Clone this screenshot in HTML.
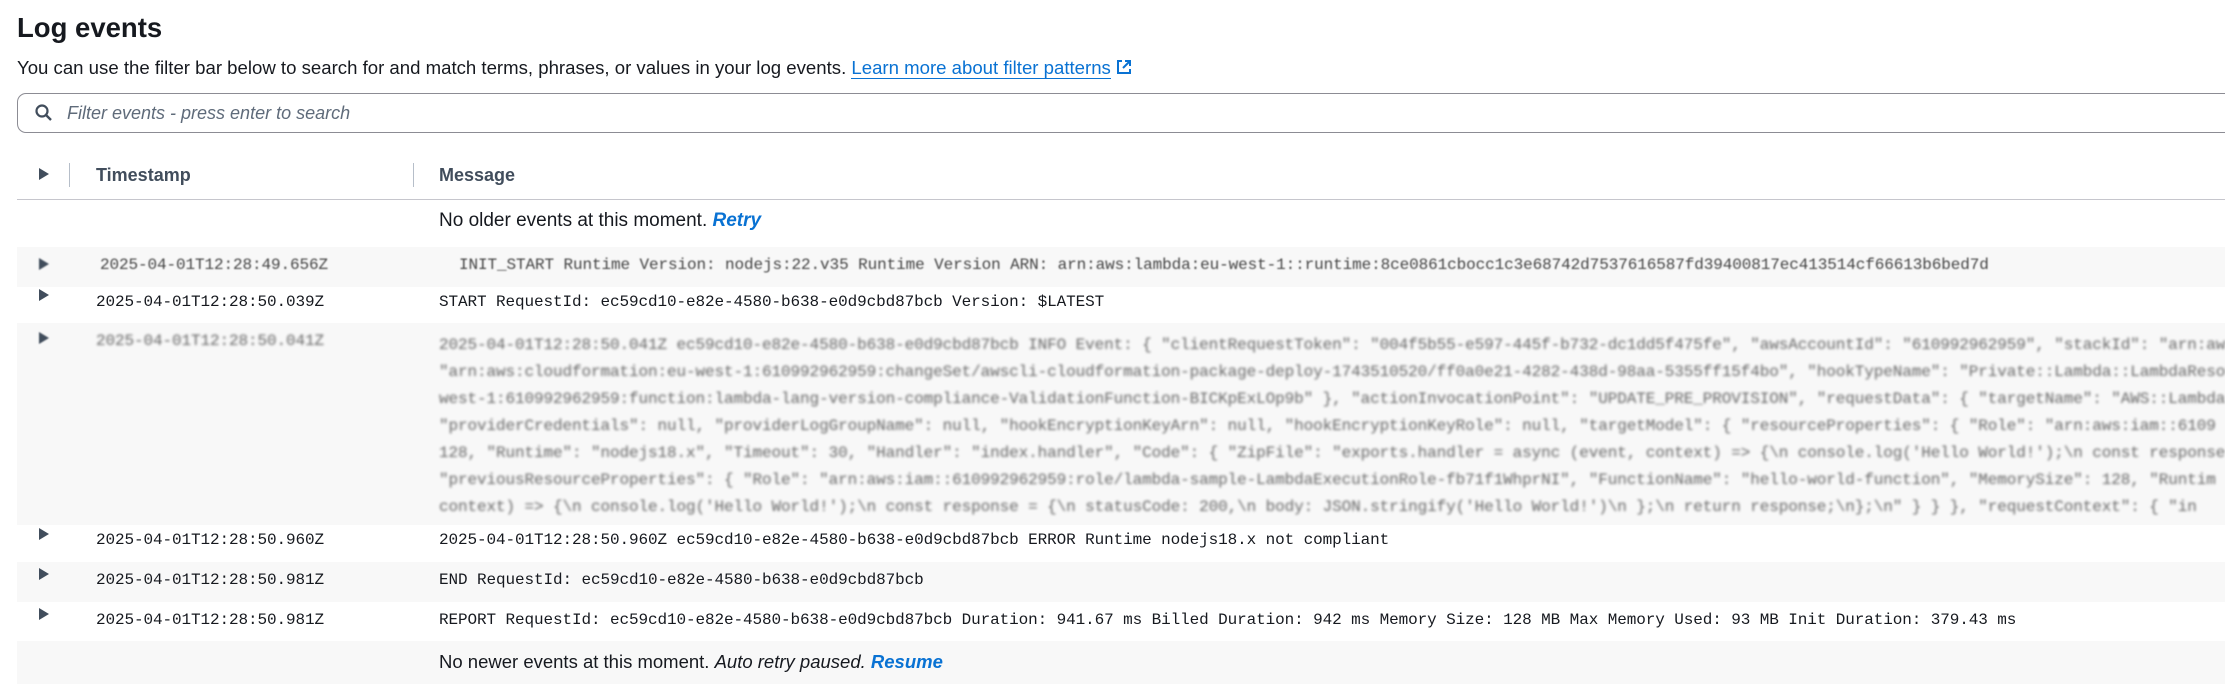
<!DOCTYPE html>
<html><head><meta charset="utf-8">
<style>
*{margin:0;padding:0;box-sizing:border-box}
body{width:2225px;height:693px;overflow:hidden;background:#fff;font-family:"Liberation Sans",sans-serif;color:#16191f;position:relative}
.a{position:absolute;white-space:nowrap}
h1{position:absolute;left:17px;top:12px;font-size:27.5px;font-weight:bold;color:#16191f}
.desc{left:17px;top:57px;font-size:18.6px}
.desc a{color:#0972d3;text-decoration:none;border-bottom:1.5px solid #0972d3}
.search{position:absolute;left:17px;top:93px;width:2230px;height:40px;border:1.5px solid #8c8c94;border-radius:9px}
.search span{position:absolute;left:49px;top:9px;font-size:18px;font-style:italic;color:#5f6b7a}
.tri{position:absolute;width:0;height:0;border-top:6px solid transparent;border-bottom:6px solid transparent;border-left:10px solid #414d5c}
.mono{font-family:"Liberation Mono",monospace;font-size:16px;letter-spacing:-0.1px}
.bg{position:absolute;left:17px;width:2208px;background:#f8f8f8}
.hd{font-size:18px;font-weight:bold;color:#414d5c}
.blur{filter:blur(1.2px);color:#666}
.blur2{filter:blur(0.7px);color:#444}
.lnk{color:#0972d3;font-weight:bold;font-style:italic}
.nt{font-size:19px}
</style></head><body>
<h1>Log events</h1>
<div class="a desc">You can use the filter bar below to search for and match terms, phrases, or values in your log events. <a>Learn more about filter patterns</a> <svg width="16" height="16" viewBox="0 0 16 16" style="vertical-align:-1px"><path d="M6 2H2v12h12v-4M9 2h5v5M14 2L7 9" fill="none" stroke="#0972d3" stroke-width="2"/></svg></div>
<div class="search"><svg style="position:absolute;left:16px;top:9px" width="20" height="20" viewBox="0 0 20 20"><circle cx="8" cy="8" r="5.5" fill="none" stroke="#414d5c" stroke-width="2.2"/><path d="M12 12l5 5" stroke="#414d5c" stroke-width="2.4"/></svg><span>Filter events - press enter to search</span></div>

<div class="tri" style="left:39px;top:168px"></div>
<div style="position:absolute;left:69px;top:163px;width:1px;height:24px;background:#b6bec9"></div>
<div class="a hd" style="left:96px;top:165px">Timestamp</div>
<div style="position:absolute;left:413px;top:163px;width:1px;height:24px;background:#b6bec9"></div>
<div class="a hd" style="left:439px;top:165px">Message</div>
<div style="position:absolute;left:17px;top:199px;width:2208px;height:1px;background:#c6c6cd"></div>

<div class="a nt" style="left:439px;top:210px">No older events at this moment. <span class="lnk">Retry</span></div>

<div class="bg" style="top:247px;height:40px"></div>
<div class="tri blur2" style="left:39px;top:258px"></div>
<div class="a mono blur2" style="left:100px;top:256px">2025-04-01T12:28:49.656Z</div>
<div class="a mono blur2" style="left:459px;top:256px">INIT_START Runtime Version: nodejs:22.v35 Runtime Version ARN: arn:aws:lambda:eu-west-1::runtime:8ce0861cbocc1c3e68742d7537616587fd39400817ec413514cf66613b6bed7d</div>

<div class="tri" style="left:39px;top:289px"></div>
<div class="a mono" style="left:96px;top:293px">2025-04-01T12:28:50.039Z</div>
<div class="a mono" style="left:439px;top:293px">START RequestId: ec59cd10-e82e-4580-b638-e0d9cbd87bcb Version: $LATEST</div>

<div class="bg" style="top:323px;height:202px"></div>
<div class="tri blur2" style="left:39px;top:332px"></div>
<div class="a mono blur" style="left:96px;top:332px">2025-04-01T12:28:50.041Z</div>
<div class="a mono blur" style="left:439px;top:332px;line-height:27px">2025-04-01T12:28:50.041Z ec59cd10-e82e-4580-b638-e0d9cbd87bcb INFO Event: { "clientRequestToken": "004f5b55-e597-445f-b732-dc1dd5f475fe", "awsAccountId": "610992962959", "stackId": "arn:aws<br>"arn:aws:cloudformation:eu-west-1:610992962959:changeSet/awscli-cloudformation-package-deploy-1743510520/ff0a0e21-4282-438d-98aa-5355ff15f4bo", "hookTypeName": "Private::Lambda::LambdaResou<br>west-1:610992962959:function:lambda-lang-version-compliance-ValidationFunction-BICKpExLOp9b" }, "actionInvocationPoint": "UPDATE_PRE_PROVISION", "requestData": { "targetName": "AWS::Lambda:<br>"providerCredentials": null, "providerLogGroupName": null, "hookEncryptionKeyArn": null, "hookEncryptionKeyRole": null, "targetModel": { "resourceProperties": { "Role": "arn:aws:iam::6109<br>128, "Runtime": "nodejs18.x", "Timeout": 30, "Handler": "index.handler", "Code": { "ZipFile": "exports.handler = async (event, context) => {\n console.log('Hello World!');\n const response<br>"previousResourceProperties": { "Role": "arn:aws:iam::610992962959:role/lambda-sample-LambdaExecutionRole-fb71f1WhprNI", "FunctionName": "hello-world-function", "MemorySize": 128, "Runtim<br>context) => {\n console.log('Hello World!');\n const response = {\n statusCode: 200,\n body: JSON.stringify('Hello World!')\n };\n return response;\n};\n" } } }, "requestContext": { "in</div>

<div class="tri" style="left:39px;top:528px"></div>
<div class="a mono" style="left:96px;top:531px">2025-04-01T12:28:50.960Z</div>
<div class="a mono" style="left:439px;top:531px">2025-04-01T12:28:50.960Z ec59cd10-e82e-4580-b638-e0d9cbd87bcb ERROR Runtime nodejs18.x not compliant</div>

<div class="bg" style="top:562px;height:40px"></div>
<div class="tri" style="left:39px;top:568px"></div>
<div class="a mono" style="left:96px;top:571px">2025-04-01T12:28:50.981Z</div>
<div class="a mono" style="left:439px;top:571px">END RequestId: ec59cd10-e82e-4580-b638-e0d9cbd87bcb</div>

<div class="tri" style="left:39px;top:608px"></div>
<div class="a mono" style="left:96px;top:611px">2025-04-01T12:28:50.981Z</div>
<div class="a mono" style="left:439px;top:611px">REPORT RequestId: ec59cd10-e82e-4580-b638-e0d9cbd87bcb Duration: 941.67 ms Billed Duration: 942 ms Memory Size: 128 MB Max Memory Used: 93 MB Init Duration: 379.43 ms</div>

<div class="bg" style="top:641px;height:43px"></div>
<div class="a" style="left:439px;top:651px;font-size:18.5px">No newer events at this moment. <i>Auto retry paused.</i> <span class="lnk">Resume</span></div>
</body></html>
